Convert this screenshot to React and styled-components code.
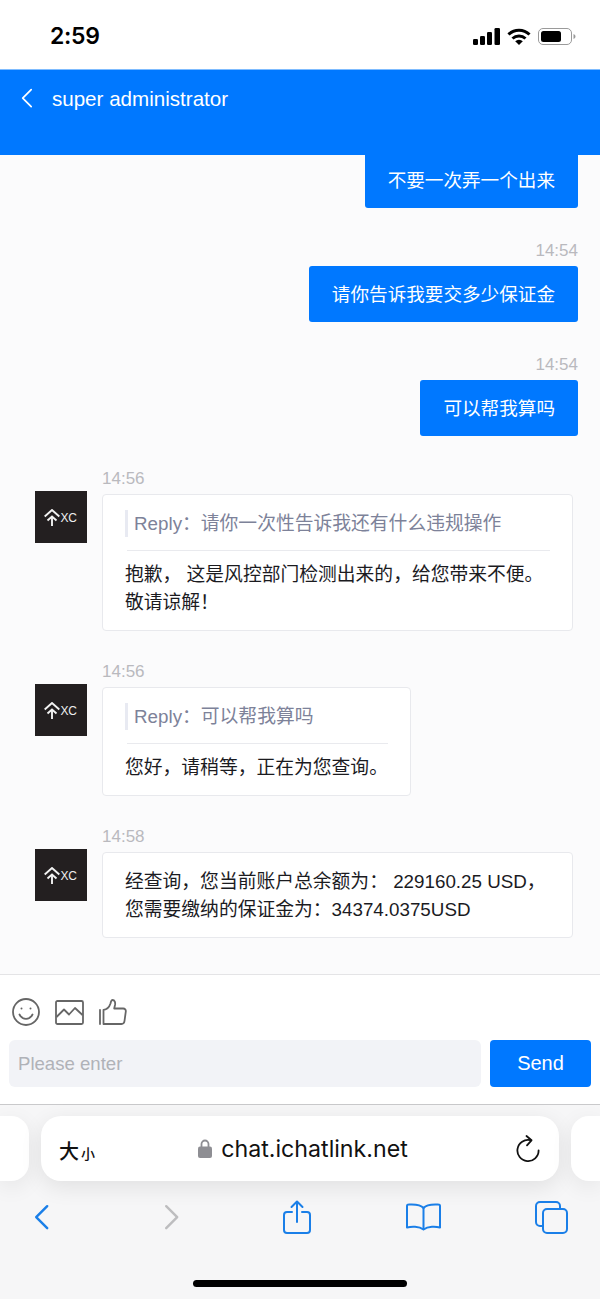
import React from "react";
import styled, { createGlobalStyle } from "styled-components";

const BLUE = "#0078ff";
const SAFARI_BLUE = "#1a7fe8";
const TEXT_FONT = `"Liberation Sans", "Noto Sans CJK SC", sans-serif`;

const Global = createGlobalStyle`
  html, body {
    margin: 0;
    padding: 0;
    background: #fff;
  }
  * {
    box-sizing: border-box;
  }
`;

const Page = styled.div`
  width: 600px;
  height: 1299px;
  display: flex;
  flex-direction: column;
  overflow: hidden;
  font-family: ${TEXT_FONT};
`;

const StatusBar = styled.div`
  height: 69px;
  flex: none;
  background: #fff;
  display: flex;
  align-items: center;
  justify-content: space-between;
  padding: 3px 24px 0 50px;
`;

const Clock = styled.span`
  font-family: Inter, sans-serif;
  font-size: 23px;
  font-weight: 600;
  letter-spacing: -0.3px;
  color: #000;
`;

const StatusIcons = styled.div`
  display: flex;
  align-items: center;
  gap: 7px;
`;

const Header = styled.div`
  height: 86px;
  flex: none;
  background: ${BLUE};
  border-top: 1px solid #7fbcff;
  display: flex;
  align-items: flex-start;
  padding: 18px 0 0 21px;
  gap: 19px;
  color: #fff;
`;

const HeaderTitle = styled.span`
  font-size: 20.6px;
  line-height: 21px;
`;

const ChatArea = styled.div`
  flex: 1;
  min-height: 0;
  background: #fbfbfc;
  overflow: hidden;
  padding: 0 22px 0 35px;
  display: flex;
  flex-direction: column;
`;

const SentRow = styled.div`
  display: flex;
  flex-direction: column;
  align-items: flex-end;
  margin-bottom: ${(p) => p.$gap}px;
`;

const Time = styled.div`
  font-size: 17px;
  line-height: 20px;
  color: #b9b9be;
  margin-bottom: 5px;
`;

const Bubble = styled.div`
  background: ${BLUE};
  color: #fff;
  font-size: 18.6px;
  line-height: 28px;
  padding: ${(p) => (p.$clipped ? "12px" : "15px")} 23px 13px;
  border-radius: ${(p) => (p.$clipped ? "0 0 3px 3px" : "3px")};
`;

const ReceivedRow = styled.div`
  display: flex;
  gap: 15px;
  margin-bottom: ${(p) => p.$gap}px;
`;

const Avatar = styled.div`
  width: 52px;
  height: 52px;
  flex: none;
  margin-top: 22px;
  background: #231f20;
  display: flex;
  align-items: center;
  justify-content: center;
`;

const ReceivedBody = styled.div`
  display: flex;
  flex-direction: column;
  align-items: flex-start;
  min-width: 0;
`;

const Card = styled.div`
  max-width: 471px;
  background: #fff;
  border: 1px solid #e8e9ed;
  border-radius: 4px;
  padding: 15px 22px 13px;
  font-size: 18.8px;
  line-height: 28px;
  color: #1b1b1f;
`;

const ReplyText = styled.div`
  border-left: 3px solid #e8eaf2;
  padding-left: 6px;
  color: #7d8299;
  line-height: 27px;
  white-space: nowrap;
`;

const ReplyDivider = styled.div`
  height: 1px;
  background: #e9eaee;
  margin: 13px 0 10px 2px;
`;

const Composer = styled.div`
  height: 130px;
  flex: none;
  background: #fff;
  border-top: 1px solid #e4e4e6;
  padding: 0 9px;
`;

const Tools = styled.div`
  height: 65px;
  display: flex;
  align-items: center;
  gap: 15px;
  padding: 9px 0 0 3px;
`;

const InputRow = styled.div`
  display: flex;
  gap: 9px;
`;

const Input = styled.div`
  flex: 1;
  height: 47px;
  background: #f2f3f7;
  border-radius: 6px;
  padding-left: 9px;
  display: flex;
  align-items: center;
  font-size: 18.6px;
  color: #b0b2b8;
`;

const SendButton = styled.div`
  width: 101px;
  height: 47px;
  background: ${BLUE};
  border-radius: 4px;
  color: #fff;
  font-size: 20px;
  display: flex;
  align-items: center;
  justify-content: center;
`;

const BrowserBar = styled.div`
  height: 195px;
  flex: none;
  background: #f6f6f7;
  border-top: 1px solid #c9c9cb;
  display: flex;
  flex-direction: column;
`;

const TabRow = styled.div`
  display: grid;
  grid-template-columns: 29px 518px 29px;
  justify-content: space-between;
  margin-top: 11px;
  height: 65px;
`;

const TabPeek = styled.div`
  background: #fff;
  border-radius: ${(p) => (p.$side === "left" ? "0 18px 18px 0" : "18px 0 0 18px")};
  box-shadow: 0 6px 22px rgba(0, 0, 0, 0.07);
`;

const AddressBar = styled.div`
  background: #fff;
  border-radius: 20px;
  box-shadow: 0 6px 22px rgba(0, 0, 0, 0.09);
  display: flex;
  align-items: center;
  justify-content: space-between;
  padding: 0 19px 0 18px;
  color: #111;
`;

const TextSize = styled.div`
  font-family: "Noto Sans CJK SC", sans-serif;
  font-size: 20px;
  font-weight: 500;
  display: flex;
  align-items: baseline;
  width: 36px;
  margin-top: 3px;
`;

const SmallChar = styled.span`
  font-size: 14px;
  margin-left: 2px;
`;

const Url = styled.div`
  display: flex;
  align-items: center;
  gap: 9px;
  font-family: Inter, sans-serif;
  font-size: 23.2px;
  margin-left: -5px;
`;

const Toolbar = styled.div`
  display: grid;
  grid-template-columns: 130px 119px 123px 129px auto;
  align-items: center;
  padding: 19px 0 0 34px;
`;

const HomeIndicator = styled.div`
  width: 214px;
  height: 7px;
  border-radius: 4px;
  background: #000;
  margin: auto auto 12px;
`;

const LogoText = styled.text`
  font-family: "Liberation Sans", sans-serif;
  font-size: 12px;
  letter-spacing: -0.2px;
  fill: #eee;
`;

function Logo() {
  return (
    <svg width="34" height="17" viewBox="0 0 34 17" fill="none" stroke="#f2f2f2" strokeWidth="1.900">
      <path d="M.7 7.500 8 1l7.300 6.500" />
      <path d="M3.500 11.500 8 7.500l4.500 4" />
      <path d="M8 8v9" />
      <LogoText x="16.500" y="12.500" stroke="none">
        XC
      </LogoText>
    </svg>
  );
}

function Chevron({ size = 1, color = "#fff", width = 2, forward = false }) {
  return (
    <svg width={14 * size} height={24 * size} viewBox="0 0 14 24" fill="none" stroke={color} strokeWidth={width} strokeLinecap="round" strokeLinejoin="round">
      <path d={forward ? "M2 2l10 10L2 22" : "M12 2 2 12l10 10"} />
    </svg>
  );
}

export default function App() {
  return (
    <Page>
      <Global />
      <StatusBar>
        <Clock>2:59</Clock>
        <StatusIcons>
          <svg width="27" height="17" viewBox="0 0 27 17" fill="#000">
            <rect x="0" y="11" width="5" height="6" rx="1.300" />
            <rect x="7" y="8" width="5" height="9" rx="1.300" />
            <rect x="14" y="4" width="5" height="13" rx="1.300" />
            <rect x="21.500" y="0" width="5.500" height="17" rx="1.300" />
          </svg>
          <svg width="24" height="17" viewBox="0 0 24 17" fill="none" stroke="#000" strokeWidth="3">
            <path d="M1.500 6.500a15 15 0 0 1 21 0" />
            <path d="M5.500 10.500a9.500 9.500 0 0 1 13 0" />
            <path d="M12 17l-3.800-3.800a5.400 5.400 0 0 1 7.600 0Z" fill="#000" stroke="none" />
          </svg>
          <svg width="38" height="17" viewBox="0 0 38 17">
            <rect x="0.500" y="0.500" width="33" height="16" rx="4.500" fill="none" stroke="#9a9a9a" />
            <rect x="3" y="3" width="20" height="11" rx="2.500" fill="#000" />
            <path d="M35.500 6v5c1.200-.4 2-1.400 2-2.500s-.8-2.100-2-2.500Z" fill="#9a9a9a" />
          </svg>
        </StatusIcons>
      </StatusBar>

      <Header>
        <Chevron size={0.85} />
        <HeaderTitle>super administrator</HeaderTitle>
      </Header>

      <ChatArea>
        <SentRow $gap={33}>
          <Bubble $clipped>不要一次弄一个出来</Bubble>
        </SentRow>
        <SentRow $gap={33}>
          <Time>14:54</Time>
          <Bubble>请你告诉我要交多少保证金</Bubble>
        </SentRow>
        <SentRow $gap={33}>
          <Time>14:54</Time>
          <Bubble>可以帮我算吗</Bubble>
        </SentRow>
        <ReceivedRow $gap={31}>
          <Avatar>
            <Logo />
          </Avatar>
          <ReceivedBody>
            <Time>14:56</Time>
            <Card>
              <ReplyText>Reply：请你一次性告诉我还有什么违规操作</ReplyText>
              <ReplyDivider />
              抱歉， 这是风控部门检测出来的，给您带来不便。敬请谅解！
            </Card>
          </ReceivedBody>
        </ReceivedRow>
        <ReceivedRow $gap={31}>
          <Avatar>
            <Logo />
          </Avatar>
          <ReceivedBody>
            <Time>14:56</Time>
            <Card>
              <ReplyText>Reply：可以帮我算吗</ReplyText>
              <ReplyDivider />
              您好，请稍等，正在为您查询。
            </Card>
          </ReceivedBody>
        </ReceivedRow>
        <ReceivedRow $gap={0}>
          <Avatar>
            <Logo />
          </Avatar>
          <ReceivedBody>
            <Time>14:58</Time>
            <Card>经查询，您当前账户总余额为： 229160.25 USD，您需要缴纳的保证金为：34374.0375USD</Card>
          </ReceivedBody>
        </ReceivedRow>
      </ChatArea>

      <Composer>
        <Tools>
          <svg width="28" height="28" viewBox="0 0 28 28" fill="none" stroke="#666" strokeWidth="1.800" strokeLinecap="round">
            <circle cx="14" cy="14" r="13" />
            <path d="M7.500 16.500c1.500 3 3.800 4.300 6.500 4.300s5-1.300 6.500-4.300" />
            <circle cx="9.500" cy="10.500" r="1" fill="#666" stroke="none" />
            <circle cx="18.500" cy="10.500" r="1" fill="#666" stroke="none" />
          </svg>
          <svg width="29" height="25" viewBox="0 0 29 25" fill="none" stroke="#666" strokeWidth="1.800" strokeLinejoin="round">
            <rect x="1" y="1" width="27" height="23" rx="1.500" />
            <path d="M1.500 17 9 9.500l5 5 6-6.500 7.500 7" />
          </svg>
          <svg width="28" height="26" viewBox="0 0 28 26" fill="none" stroke="#666" strokeWidth="1.800" strokeLinejoin="round" strokeLinecap="round">
            <path d="M1 11v14" />
            <path d="M4.500 25V11c3.500-.5 6-3.500 7-6.500.4-1.600.6-3.500 2-3.500 2.300 0 3 2.500 2.500 5l-.8 3.500h9c1.700 0 2.800 1.300 2.600 3l-1.300 9.500c-.2 1.800-1.400 3-3 3H4.500Z" />
          </svg>
        </Tools>
        <InputRow>
          <Input>Please enter</Input>
          <SendButton>Send</SendButton>
        </InputRow>
      </Composer>

      <BrowserBar>
        <TabRow>
          <TabPeek $side="left" />
          <AddressBar>
            <TextSize>
              大<SmallChar>小</SmallChar>
            </TextSize>
            <Url>
              <svg width="14" height="19" viewBox="0 0 14 19">
                <path d="M3.500 8V5a3.500 3.500 0 0 1 7 0v3" fill="none" stroke="#8e8e93" strokeWidth="1.800" />
                <rect x="0" y="7.500" width="14" height="11.500" rx="2" fill="#8e8e93" />
              </svg>
              chat.ichatlink.net
            </Url>
            <svg width="24" height="27" viewBox="0 0 24 27" fill="none" stroke="#111" strokeWidth="1.800" strokeLinecap="round" strokeLinejoin="round">
              <path d="M14.500 5.200A10.600 10.600 0 1 0 22.600 15.500" />
              <path d="M10.500 1l5 4.300-4.500 5" />
            </svg>
          </AddressBar>
          <TabPeek $side="right" />
        </TabRow>
        <Toolbar>
          <Chevron size={1.1} color={SAFARI_BLUE} width={2.2} />
          <Chevron size={1.1} color="#bdbdbf" width={2.2} forward />
          <svg width="28" height="34" viewBox="0 0 28 34" fill="none" stroke={SAFARI_BLUE} strokeWidth="2" strokeLinecap="round" strokeLinejoin="round">
            <path d="M9 12H4a3 3 0 0 0-3 3v15a3 3 0 0 0 3 3h20a3 3 0 0 0 3-3V15a3 3 0 0 0-3-3h-5" />
            <path d="M14 22V2M8.500 7 14 1.500 19.500 7" />
          </svg>
          <svg width="35" height="28" viewBox="0 0 35 28" fill="none" stroke={SAFARI_BLUE} strokeWidth="2" strokeLinejoin="round">
            <path d="M17.500 5C15 2 10 1 2.500 1.500 1.800 1.500 1 2 1 3v21.500c4-1 12-1.500 16.500 2 4.500-3.500 12.500-3 16.500-2V3c0-1-.8-1.500-1.500-1.500C25 1 20 2 17.500 5Z" />
            <path d="M17.500 5v21" />
          </svg>
          <svg width="33" height="33" viewBox="0 0 33 33" fill="none" stroke={SAFARI_BLUE} strokeWidth="2">
            <path d="M8 25H5a4 4 0 0 1-4-4V5a4 4 0 0 1 4-4h16a4 4 0 0 1 4 4v3" />
            <rect x="8" y="8" width="24" height="24" rx="4" />
          </svg>
        </Toolbar>
        <HomeIndicator />
      </BrowserBar>
    </Page>
  );
}
